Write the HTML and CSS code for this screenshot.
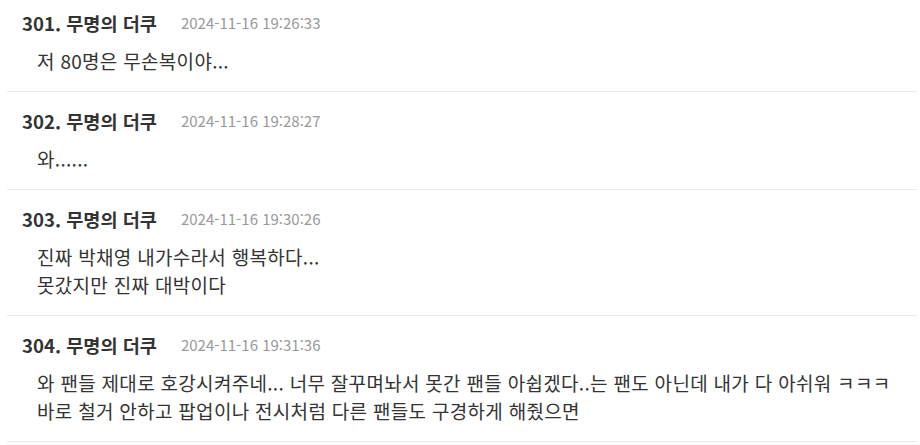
FILE: index.html
```html
<!DOCTYPE html>
<html lang="ko">
<head>
<meta charset="utf-8">
<link rel="stylesheet" href="styles.css">
</head>
<body>
<div class="list">
  <div class="item">
    <div class="head"><span class="name">301. 무명의 더쿠</span><span class="date">2024-11-16 19:26:33</span></div>
    <div class="body">저 80명은 무손복이야...</div>
  </div>
  <div class="item">
    <div class="head"><span class="name">302. 무명의 더쿠</span><span class="date">2024-11-16 19:28:27</span></div>
    <div class="body">와......</div>
  </div>
  <div class="item">
    <div class="head"><span class="name">303. 무명의 더쿠</span><span class="date">2024-11-16 19:30:26</span></div>
    <div class="body">진짜 박채영 내가수라서 행복하다...<br>못갔지만 진짜 대박이다</div>
  </div>
  <div class="item">
    <div class="head"><span class="name">304. 무명의 더쿠</span><span class="date">2024-11-16 19:31:36</span></div>
    <div class="body">와 팬들 제대로 호강시켜주네... 너무 잘꾸며놔서 못간 팬들 아쉽겠다..는 팬도 아닌데 내가 다 아쉬워 ㅋㅋㅋ<br>바로 철거 안하고 팝업이나 전시처럼 다른 팬들도 구경하게 해줬으면</div>
  </div>
</div>
</body>
</html>
```
FILE: styles.css
```css
html, body {
  margin: 0;
  padding: 0;
  background: #fff;
}
body {
  font-family: "Noto Sans CJK KR", "Noto Sans", sans-serif;
  color: #333;
  overflow: hidden;
}
.list {
  margin: -6px 3px 0 7px;
}
.item {
  padding: 16px 15px 16px;
  border-bottom: 1px solid #ebebeb;
}
.head {
  display: flex;
  align-items: center;
  height: 24px;
  margin-bottom: 13px;
  gap: 24px;
}
.name {
  font-size: 18.6px;
  font-weight: 700;
  color: #333;
}
.date {
  font-size: 15px;
  color: #999;
}
.body {
  padding-left: 15px;
  font-size: 19px;
  letter-spacing: 0.3px;
  line-height: 28px;
  color: #333;
  white-space: nowrap;
}
```
